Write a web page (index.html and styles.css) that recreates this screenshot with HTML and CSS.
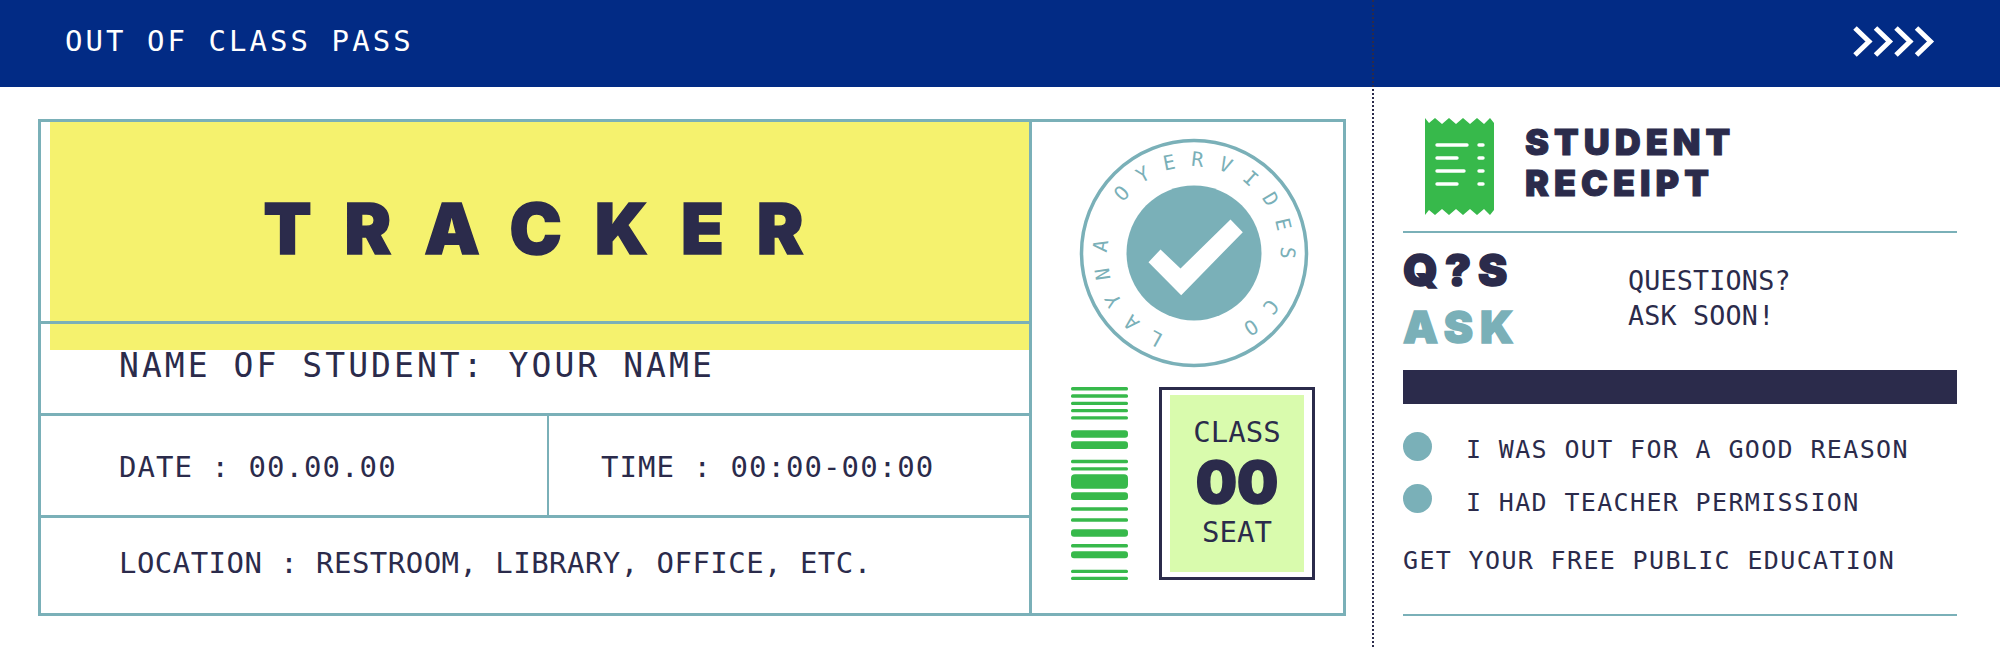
FILE: index.html
```html
<!DOCTYPE html>
<html lang="en">
<head>
  <meta charset="UTF-8" />
  <title>Out of Class Pass</title>
  <link rel="stylesheet" href="styles.css">
</head>
<body>

  <div class="page">

    <section class="pass">
      <header class="pass-bar">
        <span>OUT OF CLASS PASS</span>
      </header>

      <div class="ticket">
        <div class="ticket-info">
          <div class="title-row">
            <div class="title-block"><h1>TRACKER</h1></div>
          </div>
          <div class="row name-row">NAME OF STUDENT: YOUR NAME</div>
          <div class="row split-row">
            <div class="cell date-cell">DATE : 00.00.00</div>
            <div class="cell time-cell">TIME : 00:00-00:00</div>
          </div>
          <div class="row location-row">LOCATION : RESTROOM, LIBRARY, OFFICE, ETC.</div>
        </div>

        <div class="ticket-side">
          <svg class="stamp" width="230" height="230" viewBox="0 0 230 230">
            <defs>
              <path id="stampArc" d="M 85.4 196.3 A 86.5 86.5 0 1 1 114 201.5" />
            </defs>
            <circle cx="115" cy="115" r="112.5" fill="none" stroke="#7ab0b8" stroke-width="3.5" />
            <circle cx="115" cy="115" r="67.5" fill="#7ab0b8" />
            <polygon points="69.5,124.2 81.5,111.5 101.5,130.5 151.5,81.5 163.8,94.2 102.2,157.2" fill="#fff" />
            <text class="stamp-text"><textPath href="#stampArc">LAYNA OYERVIDES CO</textPath></text>
          </svg>

          <div class="side-bottom">
            <svg class="barcode" width="57" height="194" viewBox="0 0 57 194" fill="#37b94b">
              <rect y="0" width="57" height="3.4" rx="1.5" />
              <rect y="7.3" width="57" height="3.4" rx="1.5" />
              <rect y="14.7" width="57" height="3.2" rx="1.5" />
              <rect y="22" width="57" height="3.2" rx="1.5" />
              <rect y="29.3" width="57" height="3.2" rx="1.5" />
              <rect y="43.3" width="57" height="7.4" rx="3" />
              <rect y="54.3" width="57" height="7.6" rx="3" />
              <rect y="72.7" width="57" height="3.6" rx="1.5" />
              <rect y="80.3" width="57" height="3.2" rx="1.5" />
              <rect y="87.3" width="57" height="14.4" rx="4" />
              <rect y="105.3" width="57" height="7.6" rx="3" />
              <rect y="120.3" width="57" height="3.4" rx="1.5" />
              <rect y="131.3" width="57" height="3.4" rx="1.5" />
              <rect y="142.3" width="57" height="7.4" rx="3" />
              <rect y="157" width="57" height="3.4" rx="1.5" />
              <rect y="164.3" width="57" height="7" rx="3" />
              <rect y="182.7" width="57" height="3.4" rx="1.5" />
              <rect y="189.7" width="57" height="3.4" rx="1.5" />
            </svg>

            <div class="seat-box">
              <div class="seat-fill">
                <div class="seat-label">CLASS</div>
                <div class="seat-number">00</div>
                <div class="seat-label seat-label-low">SEAT</div>
              </div>
            </div>
          </div>
        </div>
      </div>
    </section>

    <aside class="receipt">
      <div class="receipt-bar">
        <svg width="82" height="31" viewBox="0 0 82 31" fill="none" stroke="#fff" stroke-width="5">
          <path d="M2 2 L16 15.5 L2 29" />
          <path d="M22.5 2 L36.5 15.5 L22.5 29" />
          <path d="M43 2 L57 15.5 L43 29" />
          <path d="M63.5 2 L77.5 15.5 L63.5 29" />
        </svg>
      </div>

      <div class="receipt-body">
        <div class="receipt-head">
          <svg class="receipt-icon" width="69" height="97" viewBox="0 0 69 97">
            <path fill="#37b94b" d="M0 0 L4 5 L10 0 L17 6 L24 0 L31 6 L38 0 L45 6 L52 0 L59 6 L65 0 L69 5 L69 92 L65 97 L59 91 L52 97 L45 91 L38 97 L31 91 L24 97 L17 91 L10 97 L4 92 L0 97 Z" />
            <g stroke="#fff" stroke-width="3.4" stroke-linecap="round">
              <path d="M12 27 H42" />
              <path d="M12 40 H32" />
              <path d="M12 53 H39" />
              <path d="M12 66 H32" />
              <path d="M54 27 H58" />
              <path d="M54 40 H58" />
              <path d="M54 53 H58" />
              <path d="M54 66 H58" />
            </g>
          </svg>
          <h2>STUDENT<br>RECEIPT</h2>
        </div>

        <div class="rule"></div>

        <div class="ask-row">
          <div class="ask-big">
            <div class="ask-dark">Q?S</div>
            <div class="ask-teal">ASK</div>
          </div>
          <p class="ask-note">QUESTIONS?<br>ASK SOON!</p>
        </div>

        <div class="dark-band"></div>

        <ul class="reasons">
          <li><span class="dot"></span><span class="reason-text">I WAS OUT FOR A GOOD REASON</span></li>
          <li><span class="dot"></span><span class="reason-text">I HAD TEACHER PERMISSION</span></li>
        </ul>

        <p class="free">GET YOUR FREE PUBLIC EDUCATION</p>

        <div class="rule bottom-rule"></div>
      </div>
    </aside>

  </div>

</body>
</html>
```

FILE: styles.css
```css
body {
  margin: 0;
  font-family: "DejaVu Sans Mono", monospace;
  color: #2b2b4b;
  background-color: #fff;
  overflow: hidden;
}

.page {
  display: flex;
  width: 2000px;
  height: 647px;
}

/* left part */
.pass {
  width: 1372px;
}

.pass-bar {
  height: 87px;
  background-color: #022b85;
  color: #fff;
  display: flex;
  align-items: center;
  padding-left: 65px;
  padding-bottom: 5px;
  box-sizing: border-box;
  font-size: 29px;
  letter-spacing: 3.05px;
}

.ticket {
  display: flex;
  width: 1308px;
  height: 497px;
  margin: 32px 0 0 38px;
  border: 3px solid #7ab0b8;
  box-sizing: border-box;
}

.ticket-info {
  width: 988px;
}

.title-row {
  height: 199px;
}

.title-block {
  height: 228px;
  margin-left: 9px;
  background-color: #f5f26e;
  display: flex;
  justify-content: center;
}

.title-block h1 {
  margin: 67px -21px 0 0;
  font-family: Inter, sans-serif;
  font-weight: 900;
  font-size: 70px;
  line-height: 80px;
  letter-spacing: 33px;
  -webkit-text-stroke: 1.5px #2b2b4b;
}

.row {
  border-top: 3px solid #7ab0b8;
  box-sizing: border-box;
  display: flex;
  align-items: center;
}

.name-row {
  height: 92px;
  padding: 0 0 7px 78px;
  font-size: 33px;
  letter-spacing: 3.05px;
}

.split-row {
  height: 102px;
}

.cell {
  height: 100%;
  display: flex;
  align-items: center;
  box-sizing: border-box;
  font-size: 29px;
  letter-spacing: 1.05px;
  padding-top: 2px;
}

.date-cell {
  width: 508px;
  padding-left: 78px;
  border-right: 2px solid #7ab0b8;
}

.time-cell {
  padding-left: 52px;
}

.location-row {
  height: 98px;
  padding: 0 0 6px 78px;
  font-size: 29px;
  letter-spacing: 0.46px;
}

/* stamp and seat */
.ticket-side {
  flex: 1;
  border-left: 3px solid #7ab0b8;
  padding: 16px 0 0 47px;
}

.stamp {
  display: block;
}

.stamp-text {
  font-family: "DejaVu Sans Mono", monospace;
  font-size: 20px;
  letter-spacing: 14.4px;
  fill: #7ab0b8;
}

.side-bottom {
  display: flex;
  align-items: flex-start;
  margin-top: 19px;
  margin-left: -8px;
}

.seat-box {
  width: 156px;
  height: 193px;
  margin-left: 31px;
  border: 3px solid #2b2b4b;
  box-sizing: border-box;
  padding: 5px 8px;
}

.seat-fill {
  height: 100%;
  background-color: #d9fbad;
  text-align: center;
  font-size: 29px;
}

.seat-label {
  line-height: 34px;
  padding-top: 20px;
}

.seat-number {
  font-family: Inter, sans-serif;
  font-weight: 900;
  font-size: 58px;
  line-height: 60px;
  margin-top: 3px;
  -webkit-text-stroke: 1.5px #2b2b4b;
}

.seat-label-low {
  padding-top: 3px;
}

/* right part */
.receipt {
  flex: 1;
  border-left: 2px dotted #2b2b4b;
  background: linear-gradient(#022b85 87px, #fff 87px);
}

.receipt-bar {
  height: 87px;
  display: flex;
  justify-content: flex-end;
  padding: 26px 65px 0 0;
  box-sizing: border-box;
}

.receipt-body {
  width: 554px;
  margin-left: 29px;
}

.receipt-head {
  display: flex;
  align-items: flex-start;
  padding: 31px 0 0 22px;
}

.receipt-head h2 {
  margin: 4px 0 0 31px;
  font-family: Inter, sans-serif;
  font-weight: 900;
  font-size: 36px;
  line-height: 41px;
  letter-spacing: 5px;
  -webkit-text-stroke: 1px #2b2b4b;
}

.rule {
  height: 2px;
  background-color: #7ab0b8;
  margin-top: 16px;
}

.ask-row {
  display: flex;
  height: 137px;
}

.ask-big {
  width: 225px;
  font-family: Inter, sans-serif;
  font-weight: 900;
  font-size: 44px;
  line-height: 57px;
  letter-spacing: 7px;
  padding-top: 9px;
  -webkit-text-stroke: 1.5px #2b2b4b;
}

.ask-teal {
  color: #7ab0b8;
  -webkit-text-stroke: 1.5px #7ab0b8;
}

.ask-note {
  margin: 30px 0 0;
  font-size: 26.7px;
  line-height: 35px;
  letter-spacing: 0.2px;
}

.dark-band {
  height: 34px;
  background-color: #2b2b4b;
}

.reasons {
  list-style: none;
  margin: 28px 0 0;
  padding: 0;
  font-size: 25px;
  letter-spacing: 1.35px;
}

.reasons li {
  display: flex;
  align-items: center;
  height: 29px;
  margin-bottom: 23px;
}

.reason-text {
  padding-top: 5px;
}

.reasons li:last-child .reason-text {
  padding-top: 8px;
}

.dot {
  width: 29px;
  height: 29px;
  border-radius: 50%;
  background-color: #7ab0b8;
  margin-right: 34px;
}

.free {
  margin: 32px 0 0;
  font-size: 25px;
  line-height: 32px;
  letter-spacing: 1.35px;
}

.bottom-rule {
  margin-top: 37px;
}
```
